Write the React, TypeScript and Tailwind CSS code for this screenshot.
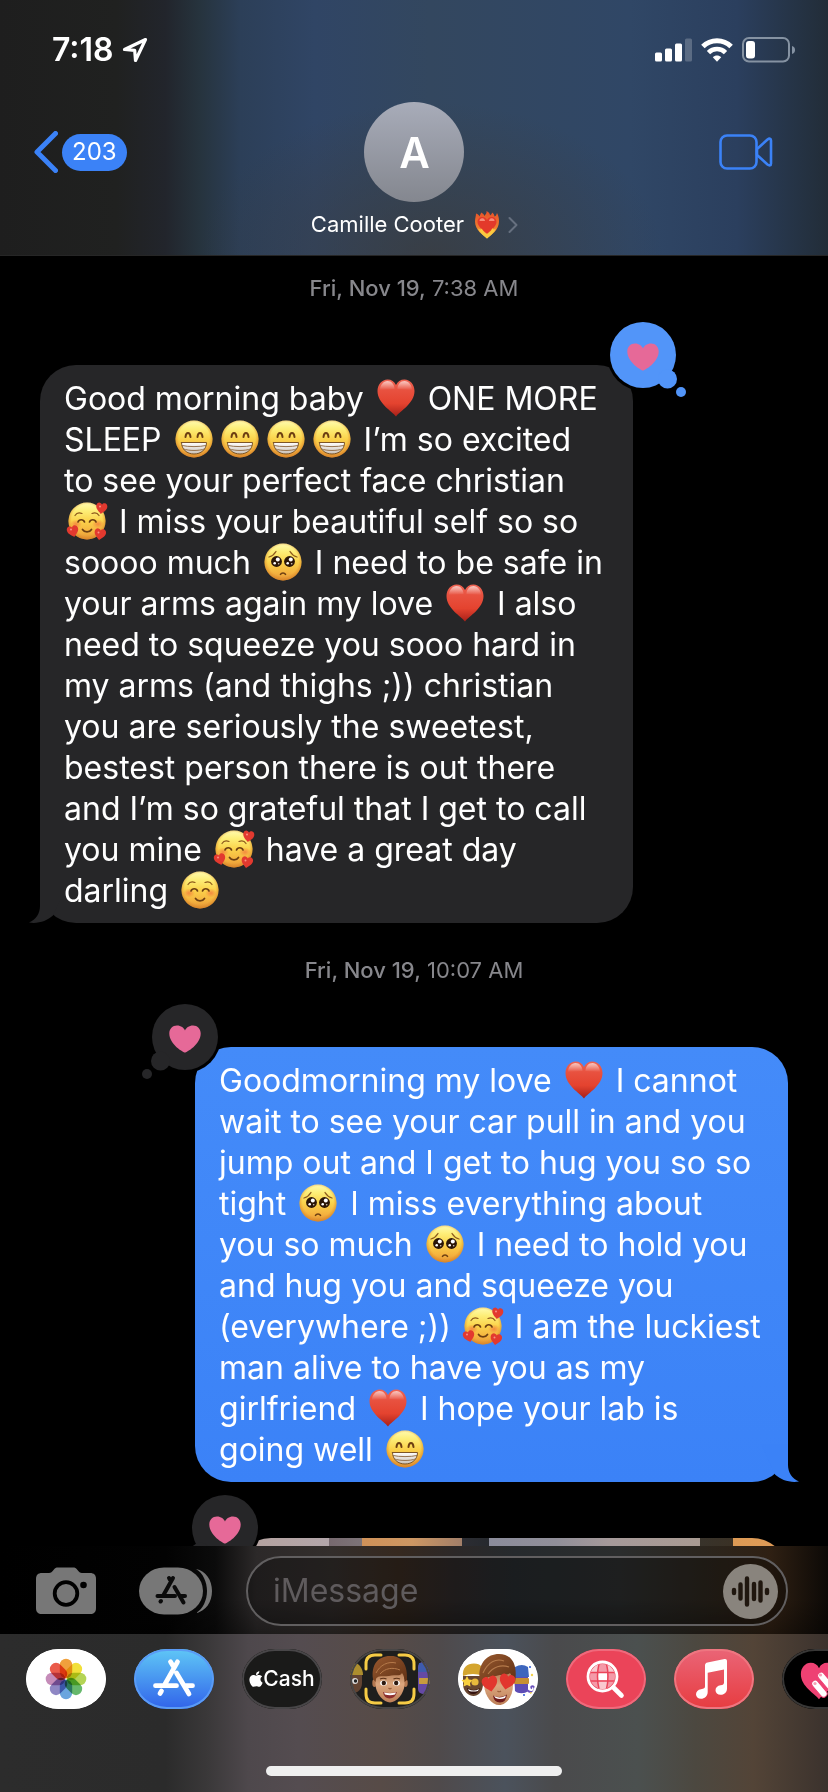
import type { ReactNode } from "react";
import { FaApple } from "react-icons/fa";

/* ---------- Emoji ---------- */

const HEART = "M0 18.5C-4 13-18.5 5.500-18.500-7C-18.500-13.500-14-18.500-8.500-18.500C-4.500-18.500-1.500-16.500 0-13C1.500-16.500 4.500-18.500 8.500-18.500C14-18.500 18.500-13.500 18.500-7C18.500 5.500 4 13 0 18.500Z";

function EmojiDefs() {
  return (
    <svg className="absolute h-0 w-0" aria-hidden="true">
      <defs>
        <linearGradient id="face" x1="0" y1="0" x2="0" y2="1">
          <stop offset="0" stopColor="#fffbb0" />
          <stop offset=".22" stopColor="#fdee78" />
          <stop offset=".5" stopColor="#fbd34b" />
          <stop offset=".8" stopColor="#f4b23f" />
          <stop offset="1" stopColor="#e39335" />
        </linearGradient>
        <radialGradient id="faceEdge" cx=".5" cy=".47" r=".53">
          <stop offset=".78" stopColor="#e08a2c" stopOpacity="0" />
          <stop offset="1" stopColor="#d27d22" stopOpacity=".7" />
        </radialGradient>
        <radialGradient id="blush">
          <stop offset="0" stopColor="#f0603a" stopOpacity=".6" />
          <stop offset="1" stopColor="#f0603a" stopOpacity="0" />
        </radialGradient>
        <linearGradient id="teeth" x1="0" y1="0" x2="0" y2="1">
          <stop offset="0" stopColor="#ffffff" />
          <stop offset="1" stopColor="#c9bfb4" />
        </linearGradient>
        <linearGradient id="heartRed" x1="0" y1="0" x2="0" y2="1">
          <stop offset="0" stopColor="#ee6453" />
          <stop offset=".3" stopColor="#e8513f" />
          <stop offset=".65" stopColor="#e4432f" />
          <stop offset="1" stopColor="#a82019" />
        </linearGradient>
        <linearGradient id="heartShine" x1="0" y1="0" x2="0" y2="1">
          <stop offset="0" stopColor="#fff" stopOpacity=".65" />
          <stop offset="1" stopColor="#fff" stopOpacity="0" />
        </linearGradient>
        <linearGradient id="flame" x1="0" y1="0" x2="0" y2="1">
          <stop offset="0" stopColor="#e6502a" />
          <stop offset=".6" stopColor="#ef7d2f" />
          <stop offset="1" stopColor="#fbd84e" />
        </linearGradient>
      </defs>
    </svg>
  );
}

function Glyph({ label, children }: { label: string; children: ReactNode }) {
  return (
    <svg
      role="img"
      aria-label={label}
      viewBox="-19 -19 38 38"
      className="mx-1 inline-block h-[38px] w-[38px] overflow-visible align-[-7px]"
      fill="none"
      strokeLinecap="round"
    >
      {children}
    </svg>
  );
}

function Face() {
  return (
    <>
      <circle r="18.500" fill="url(#face)" />
      <circle r="18.500" fill="url(#faceEdge)" />
    </>
  );
}

function Grin() {
  return (
    <Glyph label="Beaming face">
      <Face />
      <path d="M-8.500-2C-8-7.500-4-7.500-3.500-2M3.500-2C4-7.500 8-7.500 8.500-2" stroke="#6d3f12" strokeWidth="2" />
      <path d="M-12.500 3.500H12.500C12.500 10.500 7 15 0 15S-12.500 10.500-12.500 3.500Z" fill="url(#teeth)" stroke="#7c5426" strokeWidth="1" strokeLinejoin="round" />
      <path d="M-12 6.500C-6 8 6 8 12 6.500M-10.500 10C-5 12 5 12 10.500 10" stroke="#96734e" strokeWidth="1" />
    </Glyph>
  );
}

function SoftFace() {
  return (
    <>
      <Face />
      <ellipse cx="-11" cy="3" rx="6" ry="4.500" fill="url(#blush)" />
      <ellipse cx="11" cy="3" rx="6" ry="4.500" fill="url(#blush)" />
      <path d="M-12-5.500C-10.500-8-7.500-8.500-5-7.500M12-5.500C10.500-8 7.500-8.500 5-7.500" stroke="#8d5a1c" strokeWidth="1.200" />
      <path d="M-9 1C-8-2-3.500-2-2.500 1M9 1C8-2 3.500-2 2.500 1" stroke="#6d3f12" strokeWidth="1.700" />
      <path d="M-4.500 8.500C-2.500 11.700 2.500 11.700 4.500 8.500" stroke="#6d3f12" strokeWidth="1.700" />
    </>
  );
}

function Relaxed() {
  return (
    <Glyph label="Smiling face">
      <SoftFace />
    </Glyph>
  );
}

function Adored() {
  return (
    <Glyph label="Smiling face with hearts">
      <SoftFace />
      <path d={HEART} transform="translate(14.500 -12.500) rotate(8) scale(.3)" fill="#e2392f" />
      <path d={HEART} transform="translate(-14 10.500) rotate(-14) scale(.31)" fill="#e2392f" />
      <path d={HEART} transform="translate(13 13.500) rotate(10) scale(.31)" fill="#e2392f" />
      <circle cx="13" cy="-14.500" r="1" fill="#f79184" />
      <circle cx="-16" cy="8.500" r="1" fill="#f79184" />
      <circle cx="11.500" cy="11.500" r="1" fill="#f79184" />
    </Glyph>
  );
}

function Pleading() {
  return (
    <Glyph label="Pleading face">
      <Face />
      <path d="M-14-5C-10.500-6-8.500-8-7-10.500M14-5C10.500-6 8.500-8 7-10.500" stroke="#8d5a1c" strokeWidth="1.300" />
      {[-6.5, 6.5].map((x) => (
        <g key={x} transform={`translate(${x} -.5)`}>
          <circle r="5.400" fill="#2b1608" />
          <circle cx="1.300" cy="-2" r="2" fill="#fff" />
          <circle cx="-1.800" cy="1.800" r="1.300" fill="#fff" />
          <circle cx="2.200" cy="2.200" r=".8" fill="#d9cdbf" />
        </g>
      ))}
      <path d="M-2.500 12.300C-1.500 10.500 1.500 10.500 2.500 12.300" stroke="#6d3f12" strokeWidth="1.600" />
    </Glyph>
  );
}

function RedHeart() {
  return (
    <Glyph label="Red heart">
      <path d={HEART} fill="url(#heartRed)" />
      <path d="M-16-8C-16-13-12.500-17-8.500-17S-1.500-13.500-1.500-9ZM16-8C16-13 12.500-17 8.500-17S1.500-13.500 1.500-9Z" fill="url(#heartShine)" />
    </Glyph>
  );
}

function FlamingHeart() {
  return (
    <svg role="img" aria-label="Heart on fire" viewBox="0 0 26 28" className="h-7 w-[26px]">
      <path d="M13 27.500C9 24 1 19 1 10.500C1 7 2 5 2 2.500C4 3 5 4 5.500 5.500C6 3.500 7 3 7 1.500C9 2.500 10 3.500 10.500 5C11.500 3.500 13 2 12.500 0C15 1 16 3 16 4.500C17 3.500 18 3 18 1.500C19.500 2.500 20.500 4 20.500 5.500C22 5 22.500 3.500 23 2C24.500 5 25 7 25 10.500C25 19 17 24 13 27.500Z" fill="url(#flame)" />
      <path d="M13 23C10 20 3.500 15.500 3.500 11C3.500 8 5.500 6 8.300 6C10.800 6 12.500 7.500 13 9C13.500 7.500 15.200 6 17.700 6C20.500 6 22.500 8 22.500 11C22.500 15.500 16 20 13 23Z" fill="#e3392b" />
      <path d="M5.500 10C5.500 8 7 7 8.500 7.200C10 7.400 11 8.500 11 10ZM15 10C15 8.500 16 7.400 17.500 7.200C19 7 20.500 8 20.500 10Z" fill="#f68b78" />
      <path d="M13 27.500C10 25 6 22 4 17.500C6 18.500 7 19 7.500 17.500C9 19 9.500 21 11 22C12.500 23.500 14.500 23 16 20.500C17.500 20.500 17 18.500 18.500 17C19 19 20.500 18.500 22 17.500C20 22 16 25 13 27.500Z" fill="#fbc93f" />
    </svg>
  );
}

/* ---------- Messages ---------- */

function Timestamp({ date, time }: { date: string; time: string }) {
  return (
    <p className="flex h-16 items-center justify-center text-[22px] text-[#87878c]">
      <span className="whitespace-pre">
        <span className="font-medium">{date}</span> {time}
      </span>
    </p>
  );
}

function Tapback({ mine }: { mine?: boolean }) {
  return (
    <svg
      role="img"
      aria-label="Loved"
      viewBox="0 0 84 84"
      className={
        mine
          ? "absolute -top-[46px] -right-[58px] h-[84px] w-[84px] text-[#5295f9]"
          : "absolute -top-[46px] -left-[58px] h-[84px] w-[84px] text-[#262628]"
      }
    >
      <g transform={mine ? undefined : "translate(84 0) scale(-1 1)"}>
        <circle cx="36" cy="36" r="36" fill="#000" />
        <circle cx="36" cy="36" r="33" fill="currentColor" />
        <circle cx="60.500" cy="60" r="9.500" fill="currentColor" />
        <circle cx="74" cy="73" r="5" fill="currentColor" />
        <path
          d="M36 51.500C34.500 51.500 20.300 43.500 20.300 32.500C20.300 28 23.500 24.500 28 24.500C32 24.500 35 27 36 29.500C37 27 40 24.500 44 24.500C48.500 24.500 51.700 28 51.700 32.500C51.700 43.500 37.500 51.500 36 51.500Z"
          fill="#e66998"
        />
      </g>
    </svg>
  );
}

function Bubble({ mine, lines }: { mine?: boolean; lines: ReactNode[] }) {
  return (
    <div
      className={
        mine
          ? "relative ml-auto w-[593px] rounded-[36px] bg-linear-to-b from-[#448bf9] to-[#3b82f7] px-6 pt-[13px] pb-3"
          : "relative w-[593px] rounded-[36px] bg-[#262628] px-6 pt-[13px] pb-3"
      }
    >
      <p className="text-[32px] leading-[41px] text-white">
        {lines.map((line, i) => (
          <span key={i} className="block whitespace-nowrap">
            {line}
          </span>
        ))}
      </p>
      <svg
        viewBox="0 0 44 44"
        aria-hidden="true"
        className={
          mine
            ? "absolute -right-[11px] bottom-0 h-11 w-11 -scale-x-100 text-[#3b82f7]"
            : "absolute bottom-0 -left-[11px] h-11 w-11 text-[#262628]"
        }
      >
        <path d="M11 6V27C11 34 7 41 0 43.500C9 45 18 42 24 36.500L38 6Z" fill="currentColor" />
      </svg>
      <Tapback mine={!mine} />
    </div>
  );
}

const morning: ReactNode[] = [
  <>Good morning baby <RedHeart /> ONE MORE</>,
  <>SLEEP <Grin /><Grin /><Grin /><Grin /> I’m so excited</>,
  "to see your perfect face christian",
  <><Adored /> I miss your beautiful self so so</>,
  <>soooo much <Pleading /> I need to be safe in</>,
  <>your arms again my love <RedHeart /> I also</>,
  "need to squeeze you sooo hard in",
  "my arms (and thighs ;)) christian",
  "you are seriously the sweetest,",
  "bestest person there is out there",
  "and I’m so grateful that I get to call",
  <>you mine <Adored /> have a great day</>,
  <>darling <Relaxed /></>,
];

const reply: ReactNode[] = [
  <>Goodmorning my love <RedHeart /> I cannot</>,
  "wait to see your car pull in and you",
  "jump out and I get to hug you so so",
  <>tight <Pleading /> I miss everything about</>,
  <>you so much <Pleading /> I need to hold you</>,
  "and hug you and squeeze you",
  <>(everywhere ;)) <Adored /> I am the luckiest</>,
  "man alive to have you as my",
  <>girlfriend <RedHeart /> I hope your lab is</>,
  <>going well <Grin /></>,
];

/* ---------- Header ---------- */

function StatusBar() {
  return (
    <div className="flex h-[99px] items-center justify-between pr-8 pl-[52px]">
      <div className="flex items-center gap-2">
        <span className="text-[32px] font-semibold text-white">7:18</span>
        <svg viewBox="0 0 26 26" className="h-[26px] w-[26px]" fill="none" stroke="#fff" strokeWidth="3.200" strokeLinejoin="round" aria-label="Location in use" role="img">
          <path d="M23.500 2.500L2.500 12.500L12.700 13.300L13.500 23.500Z" />
        </svg>
      </div>
      <div className="flex items-center gap-[9px]">
        <svg viewBox="0 0 37 24" className="h-6 w-[37px]" fill="#fff" role="img" aria-label="Signal">
          <rect y="14.500" width="7" height="9" rx="1.500" />
          <rect x="10" y="10.500" width="7" height="13" rx="1.500" />
          <rect x="20" y="5.500" width="7" height="18" rx="1.500" />
          <rect x="30" y=".5" width="7" height="23" rx="1.500" opacity=".22" />
        </svg>
        <svg viewBox="0 0 32 24" className="h-6 w-8" fill="none" stroke="#fff" strokeWidth="5" role="img" aria-label="Wi-Fi">
          <path d="M1.900 9.500A20 20 0 0 1 30.100 9.500" transform="translate(0 -1)" />
          <path d="M7.500 15.200A12 12 0 0 1 24.500 15.200" transform="translate(0 -.6)" strokeWidth="4.600" />
          <path d="M16 23.800L11.800 19.300C14 17 18 17 20.200 19.300Z" fill="#fff" stroke="none" />
        </svg>
        <svg viewBox="0 0 54 26" className="h-[26px] w-[54px]" role="img" aria-label="Battery low">
          <rect x="1" y="1" width="46" height="23.500" rx="6" fill="none" stroke="#8592a2" strokeWidth="2" />
          <rect x="4" y="4" width="9" height="17.500" rx="3" fill="#fff" />
          <path d="M50 9C52.600 9.800 53 11.500 53 13S52.600 16.200 50 17Z" fill="#8592a2" />
        </svg>
      </div>
    </div>
  );
}

function Header() {
  return (
    <header className="shrink-0 border-b border-[#262626] bg-[radial-gradient(ellipse_28%_60%_at_52%_100%,#3a3c3fcc,transparent),linear-gradient(90deg,#1e1e1e_0%,#202120_14%,#22252c_20%,#26333d_24%,#2c3f58_29%,#304565_38%,#33475f_52%,#304766_76%,#2b3f5e_89%,#263549_95%,#222d38_100%)]">
      <StatusBar />
      <nav className="grid grid-cols-3 pt-[3px] pr-[55px] pb-2 pl-[34px]">
        <a href="#conversations" aria-label="203 unread messages, back" className="flex h-[100px] items-center gap-1 justify-self-start">
          <svg viewBox="0 0 24 42" className="h-[42px] w-6" fill="none" stroke="#3b82f7" strokeWidth="5" strokeLinecap="round" strokeLinejoin="round">
            <path d="M21.500 2.500L3 21L21.500 39.500" />
          </svg>
          <span className="flex h-[37px] items-center rounded-full bg-[#3b82f7] px-[10px] text-[24px] text-white">203</span>
        </a>
        <button type="button" className="ml-[22px] flex flex-col items-center justify-self-center">
          <span className="flex h-[100px] w-[100px] items-center justify-center rounded-full bg-linear-to-b from-[#a8acb9] to-[#84878f] text-[42px] font-semibold text-white">
            A
          </span>
          <span className="flex h-[45px] items-center text-[22px] whitespace-nowrap text-white">
            Camille Cooter
            <span className="ml-2.5"><FlamingHeart /></span>
            <svg viewBox="0 0 10 18" className="ml-2 h-[18px] w-2.5" fill="none" stroke="#66707f" strokeWidth="2" strokeLinecap="round" strokeLinejoin="round" aria-hidden="true">
              <path d="M1.500 2L8.500 9L1.500 16" />
            </svg>
          </span>
        </button>
        <button type="button" aria-label="FaceTime" className="flex h-[100px] items-center justify-self-end">
          <svg viewBox="0 0 54 36" className="h-9 w-[54px]" fill="none" stroke="#3b82f7" strokeWidth="2.600" strokeLinejoin="round">
            <rect x="1.500" y="1.500" width="36" height="33" rx="6.500" />
            <path d="M38 15L48.500 5.500C50.500 4 52 4.500 52 6.500V29.500C52 31.500 50.500 32 48.500 30.500L38 21Z" />
          </svg>
        </button>
      </nav>
    </header>
  );
}

/* ---------- Composer ---------- */

function Composer() {
  return (
    <form
      className="flex h-[88px] shrink-0 items-center bg-[linear-gradient(180deg,transparent_60%,#0005),linear-gradient(90deg,#000_0%,#020202_20%,#0b0b0b_26%,#2c2929_31%,#332e2c_40%,#36291f_48%,#2c2828_55%,#262a2d_62%,#2b2d2d_75%,#2c261e_85%,#2f2013_93%,#0c0906_100%)] pr-10 pl-9"
      onSubmit={(e) => e.preventDefault()}
    >
      <button type="button" aria-label="Camera" className="mt-[2px]">
        <svg viewBox="0 0 60 48" className="h-12 w-[60px]">
          <path d="M6 6H13C15 6 16 5 17.500 3C19 1 20 .5 22 .5H37C39 .5 40 1 41.500 3C43 5 44 6 46 6H54C58 6 60 8 60 12V41C60 45 58 47 54 47H6C2 47 0 45 0 41V12C0 8 2 6 6 6Z" fill="#777" />
          <circle cx="30" cy="26.500" r="11.300" fill="none" stroke="#000" strokeWidth="3.800" />
          <circle cx="47.500" cy="18" r="3.300" fill="#000" />
        </svg>
      </button>
      <button type="button" aria-label="Apps" className="mt-[2px] ml-[43px]">
        <svg viewBox="0 0 74 48" className="h-12 w-[74px]">
          <path d="M57 2C67 4 73 13 73 24S67 44 57 46C64 42 68 33 68 24S64 6 57 2Z" fill="#777" />
          <rect y=".5" width="64" height="47" rx="25" ry="23.500" fill="#777" />
          <path d="M34 11L24.500 28M22 34L21.500 34.500M30 11L32 14.500M35.500 20L44.500 35.500M18.500 29H36M42 29H46" stroke="#0b0b0b" strokeWidth="4" strokeLinecap="round" />
        </svg>
      </button>
      <div className="mt-[2px] ml-[33px] flex h-[70px] min-w-0 flex-1 items-center rounded-full border-2 border-[#615f60] bg-black/30 pr-2">
        <input
          type="text"
          aria-label="Message"
          placeholder="iMessage"
          className="min-w-0 flex-1 bg-transparent pl-[25px] text-[32px] text-white outline-none placeholder:text-[#5f5b5d]"
        />
        <button type="button" aria-label="Record audio" className="shrink-0">
          <svg viewBox="0 0 55 55" className="h-[55px] w-[55px]">
            <circle cx="27.500" cy="27.500" r="27.500" fill="#89847d" />
            <path d="M11 26V29M17.500 20.500V34.500M24 14.500V40.500M31 20V35M37.500 18.500V36.500M44 26V29" stroke="#20170f" strokeWidth="4.400" strokeLinecap="round" />
          </svg>
        </button>
      </div>
    </form>
  );
}

/* ---------- App drawer ---------- */

const petals = ["#f0a03c", "#f2e03a", "#b4d455", "#66b86c", "#6aa5de", "#8f87c4", "#c58cb9", "#ea5b4b"];

function PhotosIcon() {
  return (
    <svg viewBox="0 0 80 60" className="h-full w-full">
      <rect width="80" height="60" fill="#fff" />
      <g transform="translate(40 30)">
        {petals.map((c, i) => (
          <rect key={c} x="-6.200" y="-20.300" width="12.400" height="19.500" rx="6.200" fill={c} transform={`rotate(${i * 45})`} className="mix-blend-multiply" />
        ))}
      </g>
    </svg>
  );
}

function StoreIcon() {
  return (
    <svg viewBox="0 0 80 60" className="h-full w-full">
      <defs>
        <linearGradient id="store" x1="0" y1="0" x2="0" y2="1">
          <stop offset="0" stopColor="#5fc7f6" />
          <stop offset="1" stopColor="#3163ea" />
        </linearGradient>
      </defs>
      <rect width="80" height="60" fill="url(#store)" />
      <path d="M43.500 12.800L30.500 36M27.500 42L26 44.500M36.500 12.800L40 18.500M42.500 24L55 45M21.500 36.700H42.500M51 36.700H58.500" stroke="#fff" strokeWidth="4.800" strokeLinecap="round" />
    </svg>
  );
}

function Brackets() {
  return (
    <path d="M31 6H25Q16 6 16 15V20M49 6H55Q64 6 64 15V20M31 54H25Q16 54 16 45V40M49 54H55Q64 54 64 45V40" fill="none" stroke="#f5cb45" strokeWidth="3" strokeLinecap="round" />
  );
}

function MemojiCameraIcon() {
  return (
    <svg viewBox="0 0 80 60" className="h-full w-full">
      <defs>
        <linearGradient id="skin" x1="0" y1="0" x2="0" y2="1">
          <stop offset="0" stopColor="#a87048" />
          <stop offset=".45" stopColor="#dba67e" />
          <stop offset="1" stopColor="#bd7f57" />
        </linearGradient>
        <linearGradient id="hair" x1="0" y1="0" x2="1" y2="1">
          <stop offset="0" stopColor="#99592f" />
          <stop offset="1" stopColor="#5e3014" />
        </linearGradient>
      </defs>
      <rect width="80" height="60" fill="#1e1e1d" />
      <path d="M0 24H12V34C12 40 8 44 3 44H0Z" fill="#634432" />
      <path d="M0 14C7 12 13 18 13 26H0Z" fill="#ad8e2e" />
      <circle cx="5" cy="32" r="3" fill="#ddd" /><circle cx="5.500" cy="32" r="1.700" fill="#222" />
      <rect x="68" y="13" width="12" height="32" rx="5" fill="#6549a5" />
      <path d="M69 14H80V23H68Z" fill="#3e5bae" /><rect x="69" y="29" width="11" height="6" fill="#c79b3e" />
      <ellipse cx="24.500" cy="34" rx="2.200" ry="4" fill="#b57850" /><ellipse cx="55.500" cy="34" rx="2.200" ry="4" fill="#b57850" />
      <path d="M25.500 20H54.500V35C54.500 45 46 53.500 40 53.500S25.500 45 25.500 35Z" fill="url(#skin)" />
      <path d="M23 30C21 16 28 7 40 7C51 6 58 15 57 31L54.500 33C54.500 29 54 27 52 24C50 28 44 25 39 27C33 28 28 26 26 30L25.500 33Z" fill="url(#hair)" />
      <path d="M26 24C30 16 38 12 46 14M30 25C35 19 43 18 50 21" fill="none" stroke="#b57a4b" strokeWidth="1" />
      <ellipse cx="33.500" cy="34" rx="3.400" ry="2.600" fill="#fff" /><ellipse cx="46.500" cy="34" rx="3.400" ry="2.600" fill="#fff" />
      <circle cx="33.800" cy="34" r="2.200" fill="#2e1a10" /><circle cx="46.200" cy="34" r="2.200" fill="#2e1a10" />
      <path d="M30 30Q33.500 28.500 36.500 30M43.500 30Q46.500 28.500 50 30" fill="none" stroke="#5c3116" strokeWidth="1.200" />
      <path d="M38.500 39Q40 40.500 41.500 39" fill="none" stroke="#9c603c" strokeWidth="1.200" />
      <path d="M33 43Q40 45 47 43Q45 49.500 39.500 49.500T33 43Z" fill="#8c2d2c" /><path d="M34 43.500Q40 45 46 43.500L45 45.500Q40 47 35 45.500Z" fill="#fff" />
      <Brackets />
    </svg>
  );
}

function MemojiStickersIcon() {
  return (
    <svg viewBox="0 0 80 60" className="h-full w-full">
      <rect width="80" height="60" fill="#fff" />
      <path d="M56 22H70V42C67 45 60 45 57 42Z" fill="#5d4cb5" />
      <path d="M57 18Q64 14 70 18L71 28H56Z" fill="#3d66bd" /><rect x="56" y="29" width="15" height="6" rx="1" fill="#c79032" />
      <path d="M69 41C73 45 78 42 76 38C74 36 72 38 74 39.500" fill="none" stroke="#6a52bd" strokeWidth="1.800" />
      <circle cx="72" cy="18" r="1.100" fill="#3a62d8" /><circle cx="74" cy="26" r="1.200" fill="#f3d24c" /><circle cx="66" cy="46" r="1.100" fill="#3a62d8" /><circle cx="73" cy="44" r="1" fill="#f3d24c" />
      <path d="M5 27H25V35C25 43 20 47 15.500 47S5 43 5 35Z" fill="#68452f" />
      <path d="M5 27C4 19 9 14.500 16 14.500S26 19 25 27Q15 23 5 27Z" fill="#d4a52f" />
      <path d="M9 27L10.800 30.500L14.500 31L12 34L12.500 37.500L9 36L5.500 37.500L6 34L3.500 31L7.200 30.500Z" fill="#f9cf3e" />
      <circle cx="17" cy="33" r="3.600" fill="#e8b93c" />
      <path d="M9 39Q16 43 22 39Q20 45 15 45T9 39Z" fill="#34120e" /><path d="M10 40Q16 43 21 40L20 42Q15 43 11 42Z" fill="#fff" />
      <path d="M26 20H55V36C55 48 48 56 41 56S27 48 26 36Z" fill="url(#skin)" />
      <path d="M22 33C19 17 27 5 41 5C54 5 60 16 57 33L55 34C55 30 54 27 52 24C48 27 43 25 38 27C31 28 26 28 24 34Z" fill="url(#hair)" />
      <path d="M25 24C30 13 38 9 46 12M30 25C35 18 43 15 51 18" fill="none" stroke="#b57a4b" strokeWidth="1.100" />
      <path d={HEART} transform="translate(32 35) rotate(-12) scale(.42)" fill="#e2362e" />
      <path d={HEART} transform="translate(49 33) rotate(12) scale(.42)" fill="#e2362e" />
      <path d="M35 46.500Q42 50 49 45.500Q48 53.500 42 53.500T35 46.500Z" fill="#6e1b1c" /><path d="M36 47Q42 50 48 46.500L47 49Q42 51 37.500 49Z" fill="#fff" />
      <path d="M39.500 42Q41 43.500 43 42" fill="none" stroke="#9c603c" strokeWidth="1.200" />
    </svg>
  );
}

function ImagesIcon() {
  return (
    <svg viewBox="0 0 80 60" className="h-full w-full" fill="none" stroke="#fff">
      <defs>
        <clipPath id="globe"><circle cx="36.500" cy="27.500" r="12.500" /></clipPath>
      </defs>
      <rect width="80" height="60" fill="#eb4459" stroke="none" />
      <g clipPath="url(#globe)">
        <rect x="23" y="14" width="27" height="27" fill="#f49aa8" stroke="none" />
        <rect x="32" y="23.500" width="9" height="8" fill="#fff" stroke="none" />
        <path d="M24 14H32V23.500H24ZM41 14H50V23.500H41ZM32 31.500H41V41H32Z" fill="#f9c9d0" stroke="none" />
        <path d="M22 23.500H51M22 32H51M33.500 13Q29.500 27 33.500 42M40 13Q44 27 40 42" stroke="#eb4459" strokeWidth="1.500" />
      </g>
      <circle cx="36.500" cy="27.500" r="14.500" strokeWidth="2.800" />
      <path d="M47.500 38.500L55.500 46.500" strokeWidth="4.600" strokeLinecap="round" />
    </svg>
  );
}

function MusicIcon() {
  return (
    <svg viewBox="0 0 80 60" className="h-full w-full">
      <defs>
        <linearGradient id="music" x1="0" y1="0" x2="0" y2="1">
          <stop offset="0" stopColor="#ea6577" />
          <stop offset="1" stopColor="#e73c40" />
        </linearGradient>
      </defs>
      <rect width="80" height="60" fill="url(#music)" />
      <path d="M31 16.500C31 14.500 32 13.800 33.500 13.400L50.500 10C52 9.700 53 10.400 53 12V39.500C53 43.500 50 45.800 46.500 45.800C43.500 45.800 41.500 44 41.500 41.300C41.500 38.500 43.500 36.800 46.500 36.300C49 35.800 50 35.300 50 33.500V20.500L33.700 23.800V43C33.700 47.300 30.500 49.800 27 49.800C24 49.800 22 47.900 22 45.200C22 42.500 24 40.700 27 40.200C30 39.700 31 39.200 31 37.200Z" fill="#fff" />
    </svg>
  );
}

function TouchIcon() {
  return (
    <svg viewBox="0 0 80 60" className="h-full w-full">
      <rect width="80" height="60" fill="#000" />
      <path d={HEART} transform="translate(37 32) scale(.98)" fill="#ee4173" />
      <g fill="#fff" stroke="#ee4173" strokeWidth="1">
        <rect x="34" y="30" width="7" height="20" rx="3.500" transform="rotate(-40 37 40)" />
        <rect x="40" y="22" width="7" height="22" rx="3.500" transform="rotate(-40 43 32)" />
      </g>
      <circle cx="33" cy="34.500" r="1.600" fill="#f4a0b6" /><circle cx="38.500" cy="26" r="1.600" fill="#f4a0b6" />
    </svg>
  );
}

function CashIcon() {
  return (
    <span className="flex h-full w-full items-center justify-center bg-[#1a1a19] text-[21px] font-medium text-white">
      <FaApple className="h-[18px] w-[14px] shrink-0" />
      Cash
    </span>
  );
}

const apps = [
  { name: "Photos", icon: <PhotosIcon />, border: "border-white" },
  { name: "App Store", icon: <StoreIcon />, border: "border-[#5a9bf5]" },
  { name: "Apple Cash", icon: <CashIcon />, border: "border-[#484648]" },
  { name: "Memoji", icon: <MemojiCameraIcon />, border: "border-[#484646]" },
  { name: "Memoji Stickers", icon: <MemojiStickersIcon />, border: "border-white" },
  { name: "Images", icon: <ImagesIcon />, border: "border-[#ef6a7c]" },
  { name: "Music", icon: <MusicIcon />, border: "border-[#ee7680]" },
  { name: "Digital Touch", icon: <TouchIcon />, border: "border-[#383736]" },
];

function AppDrawer() {
  return (
    <footer className="flex h-[158px] shrink-0 flex-col items-center justify-between bg-[linear-gradient(90deg,#2c2c2c_0%,#2b2b2b_20%,#3a3839_25%,#4e484c_30%,#544c50_36%,#574b47_46%,#4f4a4b_53%,#4b525c_61%,#4a4a4c_67%,#4b504f_77%,#4c4840_84%,#534437_91%,#3b322d_100%)] pt-[15px] pb-4">
      <div className="flex w-full gap-7 overflow-hidden pl-[26px]">
        {apps.map((app) => (
          <button
            key={app.name}
            type="button"
            aria-label={app.name}
            className="relative h-[60px] w-20 shrink-0 overflow-hidden rounded-[33px/30px]"
          >
            {app.icon}
            <span className={`absolute inset-0 rounded-[33px/30px] border-2 ${app.border}`} />
          </button>
        ))}
      </div>
      <div className="h-[10px] w-[296px] rounded-full bg-[#efefef]" />
    </footer>
  );
}

/* ---------- Page ---------- */

export default function App() {
  return (
    <div className="flex h-screen flex-col overflow-hidden bg-black [font-family:Inter,'Liberation_Sans',sans-serif]">
      <EmojiDefs />
      <Header />
      <main className="min-h-0 flex-1 overflow-hidden px-10">
        <Timestamp date="Fri, Nov 19," time="7:38 AM" />
        <div className="mt-[45px]">
          <Bubble lines={morning} />
        </div>
        <div className="mt-[15px]">
          <Timestamp date="Fri, Nov 19," time="10:07 AM" />
        </div>
        <div className="mt-[45px]">
          <Bubble mine lines={reply} />
        </div>
        <div className="relative mt-14 ml-auto h-[400px] w-[553px] rounded-[36px] bg-[linear-gradient(90deg,#b5a29e_0%,#b3a6aa_17%,#77696f_17%,#7d7478_23%,#d09259_23%,#cd9763_32%,#a27f69_41%,#2c2d33_41%,#26292e_46%,#8b8c9b_46%,#918f99_58%,#a69a9a_68%,#a99b92_84%,#38332b_84%,#3a3125_90%,#dc9a55_90%,#e09c58_100%)]">
          <Tapback />
        </div>
      </main>
      <Composer />
      <AppDrawer />
    </div>
  );
}
